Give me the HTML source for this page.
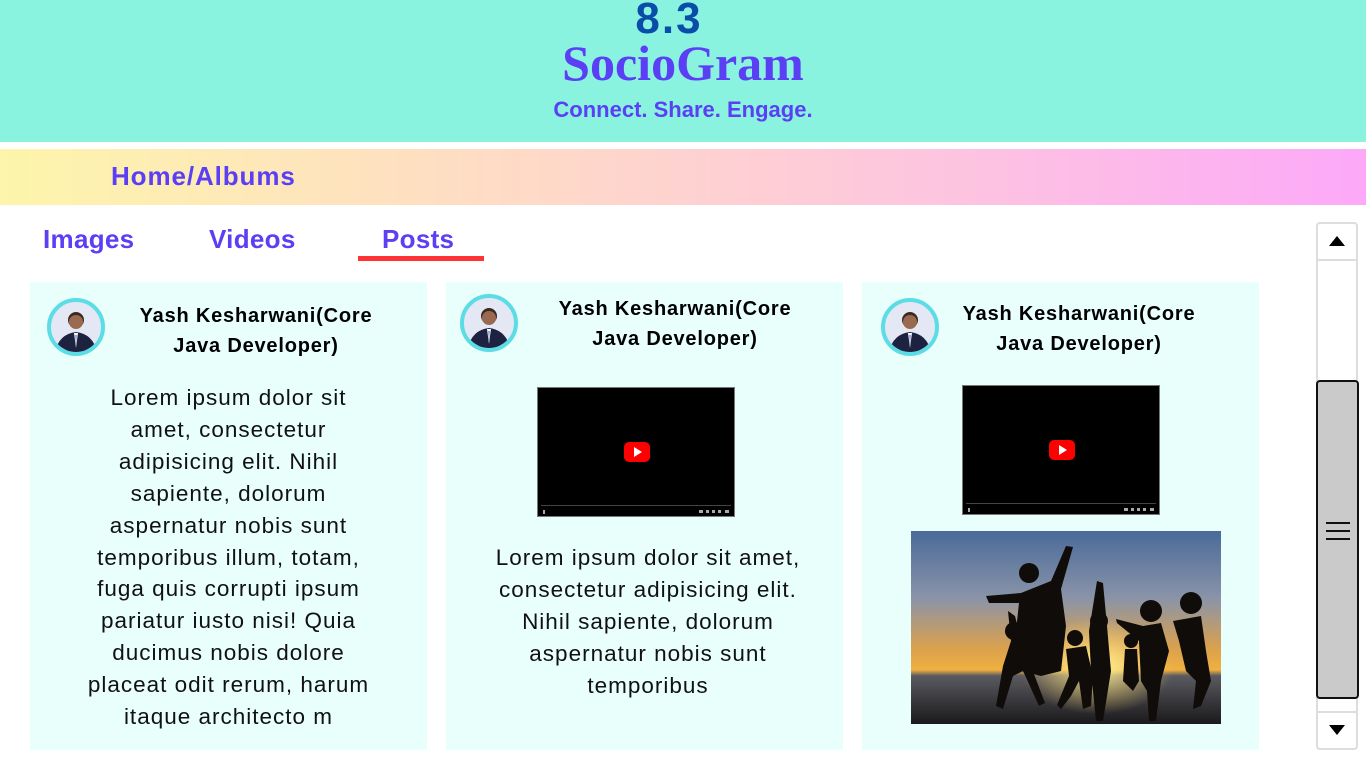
<!DOCTYPE html>
<html><head><meta charset="utf-8"><style>
*{margin:0;padding:0;box-sizing:border-box}
body{width:1366px;height:768px;overflow:hidden;background:#fff;font-family:"Liberation Sans",sans-serif;position:relative}
.a{position:absolute}
.hdr{left:0;top:0;width:1366px;height:142px;background:#8af3e0}
.c{text-align:center;white-space:nowrap}
.nav{left:0;top:149px;width:1366px;height:56px;background:linear-gradient(90deg,#fdf5ab 0%,#fed9c8 40%,#fdc4e0 70%,#fca9f8 100%)}
.tab{font-weight:bold;font-size:26px;color:#5a3ff5;letter-spacing:0.3px}
.card{background:#e8fffc;width:397px;height:468px;top:282px}
.name{font-weight:bold;font-size:20px;line-height:30px;color:#000;text-align:center;white-space:nowrap;letter-spacing:0.8px}
.txt{font-size:22.5px;line-height:31.9px;color:#111;text-align:center;white-space:nowrap;letter-spacing:1px}
.av{width:58px;height:58px;border-radius:50%;border:4px solid #5cdde6;background:#e4e8f4;overflow:hidden}
.vid{width:198px;height:130px;background:#000;border:1px solid #777}
.yt{position:absolute;left:86px;top:54px;width:26px;height:20px;background:#f00;border-radius:5px}
.yt:after{content:"";position:absolute;left:10px;top:5px;border-left:8px solid #fff;border-top:5px solid transparent;border-bottom:5px solid transparent}
.bar{position:absolute;left:3px;right:3px;bottom:10px;height:1px;background:#444}
.ctl{position:absolute;left:5px;bottom:2px;width:40px;height:4px;border-left:2px solid #aaa}
.ctr{position:absolute;right:5px;bottom:2px;width:30px;height:4px;border-top:3px dotted #aaa}
</style></head><body>
<div class="a hdr"></div>
<div class="a c" style="left:-14px;width:1366px;top:-6px;font-size:44px;font-weight:bold;color:#0a4da8;letter-spacing:2px">8.3</div>
<div class="a c" style="left:0;width:1366px;top:34px;font-family:'Liberation Serif',serif;font-size:50px;font-weight:bold;color:#5a3ff5">SocioGram</div>
<div class="a c" style="left:0;width:1366px;top:97px;font-size:22px;font-weight:bold;color:#5a3ff5">Connect. Share. Engage.</div>
<div class="a nav"></div>
<div class="a tab" style="left:111px;top:161px;letter-spacing:0.9px">Home/Albums</div>
<div class="a tab" style="left:43px;top:224px">Images</div>
<div class="a tab" style="left:209px;top:224px">Videos</div>
<div class="a tab" style="left:382px;top:224px">Posts</div>
<div class="a" style="left:358px;top:256px;width:126px;height:5px;background:#ff3333"></div>

<div class="a card" style="left:30px"></div>
<div class="a card" style="left:446px"></div>
<div class="a card" style="left:862px"></div>

<svg width="0" height="0" style="position:absolute"><defs><g id="p"><circle cx="25" cy="18" r="8" fill="#3a2a20"/><circle cx="25" cy="20" r="7" fill="#9a6a50"/><path d="M4 50 Q8 32 25 30 Q42 32 46 50 Z" fill="#1c2240"/><path d="M23 31 L25 46 L27 31 Z" fill="#fff"/><path d="M24.5 33 L25 44 L25.5 33 Z" fill="#2040a0"/></g></defs></svg>

<div class="a av" style="left:47px;top:298px"><svg width="50" height="50"><use href="#p"/></svg></div>
<div class="a name" style="left:95px;width:322px;top:301px">Yash Kesharwani(Core<br>Java Developer)</div>
<div class="a txt" style="left:30px;width:397px;top:382px">Lorem ipsum dolor sit<br>amet, consectetur<br>adipisicing elit. Nihil<br>sapiente, dolorum<br>aspernatur nobis sunt<br>temporibus illum, totam,<br>fuga quis corrupti ipsum<br>pariatur iusto nisi! Quia<br>ducimus nobis dolore<br>placeat odit rerum, harum<br>itaque architecto m</div>

<div class="a av" style="left:460px;top:294px"><svg width="50" height="50"><use href="#p"/></svg></div>
<div class="a name" style="left:518px;width:314px;top:294px">Yash Kesharwani(Core<br>Java Developer)</div>
<div class="a vid" style="left:537px;top:387px"><div class="yt"></div><div class="bar"></div><div class="ctl"></div><div class="ctr"></div></div>
<div class="a txt" style="left:446px;width:404px;top:542px">Lorem ipsum dolor sit amet,<br>consectetur adipisicing elit.<br>Nihil sapiente, dolorum<br>aspernatur nobis sunt<br>temporibus</div>

<div class="a av" style="left:881px;top:298px"><svg width="50" height="50"><use href="#p"/></svg></div>
<div class="a name" style="left:939px;width:280px;top:299px">Yash Kesharwani(Core<br>Java Developer)</div>
<div class="a vid" style="left:962px;top:385px"><div class="yt"></div><div class="bar"></div><div class="ctl"></div><div class="ctr"></div></div>

<svg class="a" style="left:911px;top:531px" width="310" height="193" viewBox="0 0 310 193">
<defs><linearGradient id="sky" x1="0" y1="0" x2="0" y2="1"><stop offset="0" stop-color="#4a6a9a"/><stop offset="0.35" stop-color="#8a94a8"/><stop offset="0.6" stop-color="#d8a050"/><stop offset="0.72" stop-color="#f0b040"/><stop offset="0.75" stop-color="#5a5a60"/><stop offset="1" stop-color="#1a1a1c"/></linearGradient>
<radialGradient id="sun" cx="0.6" cy="0.7" r="0.25"><stop offset="0" stop-color="#fff6a0"/><stop offset="1" stop-color="#ffd060" stop-opacity="0"/></radialGradient></defs>
<rect width="310" height="193" fill="url(#sky)"/>
<rect width="310" height="193" fill="url(#sun)"/>
<g fill="#100c0a">
<circle cx="118" cy="42" r="10"/><path d="M75 65 L110 62 L140 50 L155 15 L162 16 L150 58 L155 95 L150 140 L130 145 L110 140 L105 100 L108 72 L78 72Z"/>
<circle cx="103" cy="100" r="9"/><path d="M97 80 L100 110 L92 135 L85 175 L92 178 L102 145 L112 140 L128 175 L134 172 L118 130 L110 108 L104 85Z"/>
<circle cx="164" cy="107" r="8"/><path d="M155 118 L175 115 L182 145 L180 175 L172 178 L168 150 L160 165 L150 178 L146 174 L158 145Z"/>
<circle cx="188" cy="90" r="9"/><path d="M186 50 L192 52 L196 95 L200 140 L192 190 L185 190 L180 140 L178 100Z"/>
<circle cx="220" cy="110" r="7"/><path d="M214 118 L226 118 L228 150 L222 160 L212 150Z"/>
<circle cx="240" cy="80" r="11"/><path d="M205 88 L232 95 L250 92 L258 120 L250 150 L245 190 L238 190 L236 160 L230 150 L228 110 L206 92Z"/>
<circle cx="280" cy="72" r="11"/><path d="M262 90 L290 85 L295 120 L300 150 L290 175 L282 178 L285 150 L275 140 L268 110Z"/>
</g>
</svg>

<div class="a" style="left:1316px;top:222px;width:42px;height:528px;border:2px solid #ddd;border-radius:4px;background:#fff"></div>
<div class="a" style="left:1316px;top:222px;width:42px;height:39px;border:2px solid #ddd;border-radius:4px 4px 0 0;background:#fff"></div>
<div class="a" style="left:1329px;top:236px;border-bottom:10px solid #000;border-left:8px solid transparent;border-right:8px solid transparent"></div>
<div class="a" style="left:1316px;top:711px;width:42px;height:39px;border:2px solid #ddd;border-radius:0 0 4px 4px;background:#fff"></div>
<div class="a" style="left:1329px;top:725px;border-top:10px solid #000;border-left:8px solid transparent;border-right:8px solid transparent"></div>
<div class="a" style="left:1316px;top:380px;width:43px;height:319px;border:2px solid #111;border-radius:4px;background:#cacaca"></div>
<div class="a" style="left:1326px;top:522px;width:24px;height:2px;background:#111;box-shadow:0 8px 0 #111,0 16px 0 #111"></div>
</body></html>
